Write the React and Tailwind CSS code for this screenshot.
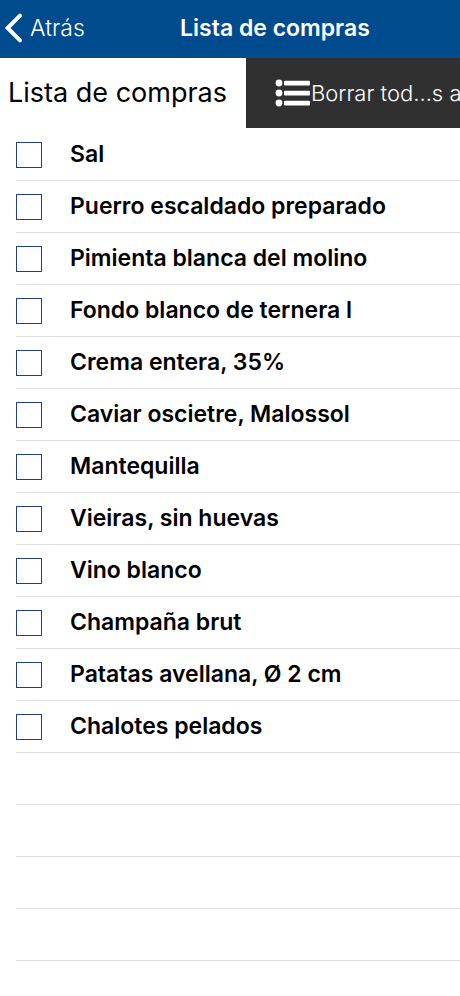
import React from "react";

const items = [
  "Sal",
  "Puerro escaldado preparado",
  "Pimienta blanca del molino",
  "Fondo blanco de ternera l",
  "Crema entera, 35%",
  "Caviar oscietre, Malossol",
  "Mantequilla",
  "Vieiras, sin huevas",
  "Vino blanco",
  "Champaña brut",
  "Patatas avellana, Ø 2 cm",
  "Chalotes pelados",
];

const emptyRows = [1, 2, 3, 4];

function BackIcon() {
  return (
    <svg width="18" height="30" viewBox="0 0 18 30" fill="none" aria-hidden="true">
      <path d="M16 2.6 L3.6 15 L16 27.4" stroke="#fff" strokeWidth="4" strokeLinecap="round" strokeLinejoin="miter" />
    </svg>
  );
}

function ListIcon() {
  return (
    <svg width="36" height="28" viewBox="0 0 36 28" fill="#fff" className="shrink-0" aria-hidden="true">
      <circle cx="4" cy="4" r="3.4" />
      <circle cx="4" cy="14" r="3.4" />
      <circle cx="4" cy="24" r="3.4" />
      <rect x="9" y="1.8" width="26" height="4.6" rx="1" />
      <rect x="9" y="11.8" width="26" height="4.6" rx="1" />
      <rect x="9" y="21.8" width="26" height="4.6" rx="1" />
    </svg>
  );
}

export default function App() {
  return (
    <div className="min-h-screen overflow-hidden bg-white font-['Inter',sans-serif] text-black">
      <header className="grid h-[58px] grid-cols-[180px_1fr] items-center bg-[#004a8e] pb-0.5 text-white">
        <button type="button" className="flex items-center gap-2 pl-1 text-[23px] font-light">
          <BackIcon />
          <span>Atrás</span>
        </button>
        <h1 className="whitespace-nowrap text-[23px] font-semibold">Lista de compras</h1>
      </header>

      <div className="flex h-[70px] overflow-hidden">
        <h2 className="flex w-[246px] shrink-0 items-center whitespace-nowrap pl-2 text-[27px]">Lista de compras</h2>
        <button
          type="button"
          className="flex flex-1 items-center overflow-hidden whitespace-nowrap bg-[#303030] pl-[29px] text-[22px] font-light text-white"
        >
          <ListIcon />
          <span>Borrar tod...s a</span>
        </button>
      </div>

      <ul className="pl-4 pt-px">
        {items.map((item) => (
          <li key={item} className="h-[52px] border-b border-[#e0e0e0]">
            <label className="flex h-full items-center gap-7 whitespace-nowrap text-[23px] font-semibold">
              <input
                type="checkbox"
                className="size-[26px] shrink-0 appearance-none border border-[#1f3f8c] bg-white checked:bg-[#1f3f8c]"
              />
              {item}
            </label>
          </li>
        ))}
        {emptyRows.map((row) => (
          <li key={row} className="h-[52px] border-b border-[#e0e0e0]" aria-hidden="true" />
        ))}
      </ul>
    </div>
  );
}
